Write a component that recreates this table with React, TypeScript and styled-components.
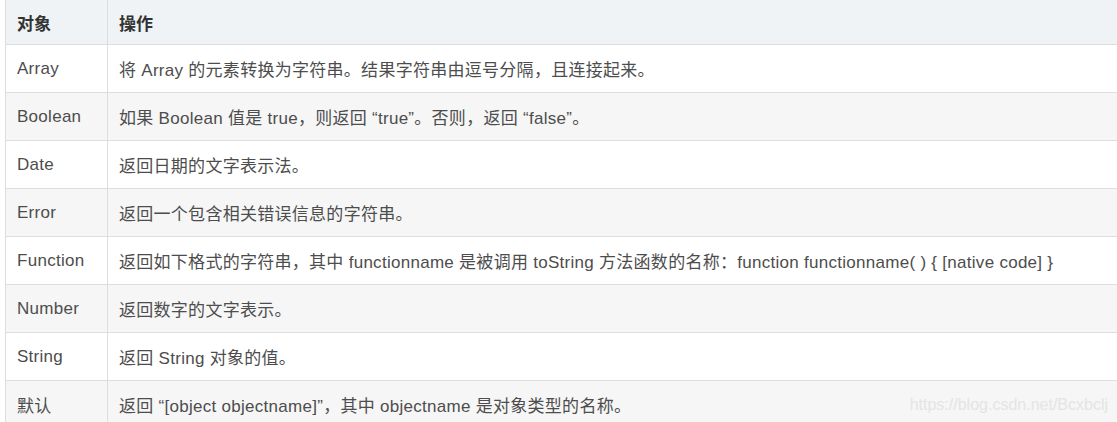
import React from 'react';
import styled, { createGlobalStyle } from 'styled-components';

const GlobalStyle = createGlobalStyle`
  html, body {
    margin: 0;
    padding: 0;
    background: #fff;
    overflow: hidden;
  }
`;

const Page = styled.div`
  position: relative;
  width: 1117px;
  height: 422px;
  overflow: hidden;
  padding-left: 5px;
  box-sizing: border-box;
  font-family: 'Liberation Sans', Arial, 'Noto Sans CJK SC', sans-serif;
`;

const Table = styled.table`
  width: 1140px;
  border-collapse: collapse;
  table-layout: fixed;
  margin-top: -1px;
  color: #4d4d4d;
  font-size: 17px;
`;

const HeadCell = styled.th`
  background: #eff3f5;
  border: 1px solid #ddd;
  height: 45px;
  padding: 0 11px;
  text-align: left;
  font-weight: bold;
  color: #333;
  box-sizing: border-box;
`;

const Row = styled.tr<{ $striped: boolean }>`
  background: ${(p) => (p.$striped ? '#f6f6f6' : '#fff')};
`;

const Cell = styled.td`
  border: 1px solid #ddd;
  height: 48px;
  padding: 0 10px 0 11px;
  white-space: nowrap;
  box-sizing: border-box;
  letter-spacing: 0.28px;
`;

const Watermark = styled.div`
  position: absolute;
  right: 9px;
  bottom: 8px;
  font-size: 16px;
  color: #e4e4e4;
  font-family: 'Liberation Sans', Arial, sans-serif;
  pointer-events: none;
`;

const rows: [string, string][] = [
  ['Array', '将 Array 的元素转换为字符串。结果字符串由逗号分隔，且连接起来。'],
  ['Boolean', '如果 Boolean 值是 true，则返回 “true”。否则，返回 “false”。'],
  ['Date', '返回日期的文字表示法。'],
  ['Error', '返回一个包含相关错误信息的字符串。'],
  ['Function', '返回如下格式的字符串，其中 functionname 是被调用 toString 方法函数的名称：function functionname( ) { [native code] }'],
  ['Number', '返回数字的文字表示。'],
  ['String', '返回 String 对象的值。'],
  ['默认', '返回 “[object objectname]”，其中 objectname 是对象类型的名称。'],
];

export default function App() {
  return (
    <Page>
      <GlobalStyle />
      <Table>
        <colgroup>
          <col style={{ width: 102 }} />
          <col />
        </colgroup>
        <thead>
          <tr>
            <HeadCell>对象</HeadCell>
            <HeadCell>操作</HeadCell>
          </tr>
        </thead>
        <tbody>
          {rows.map(([name, op], i) => (
            <Row key={name} $striped={i % 2 === 1}>
              <Cell>{name}</Cell>
              <Cell>{op}</Cell>
            </Row>
          ))}
        </tbody>
      </Table>
      <Watermark>https://blog.csdn.net/Bcxbclj</Watermark>
    </Page>
  );
}
